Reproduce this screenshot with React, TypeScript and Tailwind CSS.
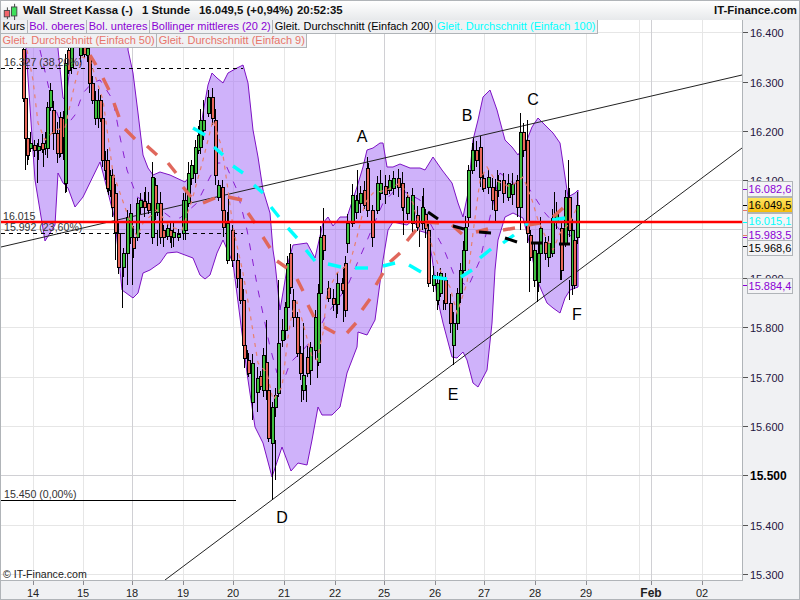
const hours = [33, 83, 132, 183, 233, 284, 335, 384, 435, 484, 535, 586, 639, 702];
const darkHours = [132, 384, 651];
const levels = [32, 81, 131, 180, 278, 327, 377, 426, 525, 574];
const darkLevels = [229, 475];

const prices = [
  { label: "16.400", y: 32 },
  { label: "16.300", y: 82 },
  { label: "16.200", y: 131 },
  { label: "16.100", y: 180 },
  { label: "15.900", y: 278 },
  { label: "15.800", y: 327 },
  { label: "15.700", y: 377 },
  { label: "15.600", y: 426 },
  { label: "15.500", y: 475, bold: true },
  { label: "15.400", y: 525 },
  { label: "15.300", y: 574 },
];

const days = [
  { label: "14", x: 33 },
  { label: "15", x: 83 },
  { label: "18", x: 132 },
  { label: "19", x: 183 },
  { label: "20", x: 233 },
  { label: "21", x: 284 },
  { label: "22", x: 335 },
  { label: "25", x: 384 },
  { label: "26", x: 435 },
  { label: "27", x: 484 },
  { label: "28", x: 535 },
  { label: "29", x: 586 },
  { label: "Feb", x: 651, bold: true },
  { label: "02", x: 702 },
];

const tags = [
  { label: "16.082,6", y: 181, cls: "text-[#8a00d4] bg-[#f4f4f6]" },
  { label: "16.049,5", y: 197, cls: "text-black bg-gradient-to-b from-[#ffe65c] to-[#f5bd00]" },
  { label: "16.015,1", y: 213, cls: "text-[#00ffff] bg-[#f4f4f6]" },
  { label: "15.983,5", y: 227, cls: "text-[#8a00d4] bg-[#f4f4f6]" },
  { label: "15.968,6", y: 240, cls: "text-black bg-[#f4f4f6]" },
  { label: "15.884,4", y: 278, cls: "text-[#8a00d4] bg-[#f4f4f6]" },
];

const tagTicks = [
  { y: 189, c: "#8a00d4" },
  { y: 205, c: "#000000" },
  { y: 210, c: "#e8746a" },
  { y: 222, c: "#00ffff" },
  { y: 235, c: "#e8746a" },
  { y: 237, c: "#8a00d4" },
  { y: 246, c: "#000000" },
  { y: 285, c: "#8a00d4" },
];

const legend = [
  { label: "Kurs", cls: "text-black" },
  { label: "Bol. oberes", cls: "text-[#8a00d4]" },
  { label: "Bol. unteres", cls: "text-[#8a00d4]" },
  { label: "Bollinger mittleres (20 2)", cls: "text-[#8a00d4]" },
  { label: "Gleit. Durchschnitt (Einfach 200)", cls: "text-black" },
  { label: "Gleit. Durchschnitt (Einfach 100)", cls: "text-[#00ffff]" },
];
const legend2 = [
  { label: "Gleit. Durchschnitt (Einfach 50)", cls: "text-[#e8746a]" },
  { label: "Gleit. Durchschnitt (Einfach 9)", cls: "text-[#e8746a]" },
];

// bollinger band outline, left to right along the top then back along the bottom
const band =
  "26,40 58,40 58,49 63,98 66,100 72,49 72,40 128,40 128,50 133,73 138,113 143,155 148,168 153,175 160,172 170,175 185,182 " +
  "195,170 203,113 208,85 212,73 217,78 223,83 228,73 237,68 243,65 248,83 253,130 258,157 263,190 270,213 273,250 275,263 280,310 " +
  "288,263 293,245 307,243 315,258 323,223 328,217 333,226 340,217 347,217 357,187 363,167 367,150 373,148 380,143 383,143 387,167 " +
  "393,167 400,164 410,168 420,168 425,170 433,157 442,170 452,183 458,203 463,217 468,193 473,140 478,120 483,97 490,90 497,110 " +
  "505,140 512,147 518,155 527,140 532,127 538,118 547,127 553,133 560,143 563,163 568,197 575,193 578,190 " +
  "578,287 570,290 565,298 560,313 553,308 547,303 537,280 528,237 523,218 513,213 505,217 498,240 495,270 492,323 487,370 478,387 " +
  "473,383 467,360 463,352 457,358 452,357 443,323 437,297 432,257 427,233 420,231 413,220 407,225 393,222 388,230 383,260 375,320 " +
  "367,335 358,332 357,347 347,373 340,407 332,415 322,415 318,407 312,440 307,465 298,463 291,471 282,447 272,477 263,443 255,427 " +
  "247,373 242,333 233,263 223,240 217,253 210,275 205,279 200,275 193,258 177,252 167,253 160,263 150,270 143,273 138,293 133,298 " +
  "122,290 115,220 103,173 100,162 83,197 75,207 68,188 63,183 58,173 55,225 45,241 35,180 26,49";

// x, body top, body bottom, 1 = up candle
const candles: [number, number, number, number][] = [
  [23, 49, 98, 0], [25, 98, 138, 0], [27, 138, 155, 0], [30, 143, 148, 1], [34, 145, 150, 0], [38, 146, 150, 1], [42, 143, 149, 0], [45, 143, 148, 1],
  [47, 107, 148, 1], [50, 90, 107, 1], [53, 110, 133, 0], [57, 133, 153, 0], [60, 117, 153, 0], [63, 118, 137, 0], [65, 63, 183, 1], [68, 50, 70, 0],
  [71, 40, 67, 1], [80, 46, 55, 1], [84, 46, 54, 0], [87, 48, 55, 1], [89, 55, 83, 0], [92, 83, 100, 0], [95, 100, 118, 1], [98, 100, 118, 1], [100, 100, 118, 0],
  [102, 118, 160, 0], [105, 160, 170, 0], [107, 160, 188, 0], [110, 175, 190, 1], [112, 175, 207, 0], [115, 193, 232, 0], [118, 233, 267, 0], [123, 253, 267, 1],
  [127, 217, 253, 1], [130, 213, 237, 1], [133, 237, 248, 0], [137, 203, 237, 1], [140, 200, 207, 1], [144, 201, 207, 0], [148, 203, 210, 0], [152, 177, 237, 1],
  [155, 185, 210, 0], [157, 203, 212, 1], [160, 203, 237, 0], [163, 230, 237, 0], [167, 228, 236, 1], [170, 230, 236, 0], [173, 232, 237, 1], [178, 234, 237, 1],
  [183, 200, 233, 1], [185, 200, 230, 1], [188, 173, 203, 1], [191, 165, 178, 1], [195, 147, 173, 1], [198, 135, 150, 1], [200, 120, 147, 1], [203, 120, 130, 1], [208, 97, 113, 1],
  [212, 97, 118, 0], [215, 120, 175, 0], [218, 185, 197, 1], [222, 187, 210, 0], [223, 210, 227, 0], [227, 223, 260, 1], [232, 230, 260, 0],
  [237, 260, 278, 0], [240, 278, 300, 0], [243, 300, 345, 0], [244, 345, 358, 0], [248, 360, 373, 0], [252, 363, 402, 1], [257, 378, 392, 1], [260, 376, 386, 0],
  [263, 355, 390, 1], [266, 362, 390, 0], [268, 390, 438, 0], [272, 407, 443, 1], [275, 395, 407, 1], [278, 343, 393, 1], [282, 330, 340, 1], [285, 307, 330, 1],
  [287, 263, 307, 1], [290, 253, 287, 0], [293, 300, 317, 0], [297, 317, 353, 0], [300, 353, 373, 0], [303, 375, 390, 1], [307, 357, 373, 0], [310, 347, 370, 1],
  [315, 317, 350, 1], [318, 293, 362, 1], [320, 237, 293, 1], [323, 235, 250, 0], [328, 288, 298, 0], [333, 298, 304, 0], [337, 283, 304, 1], [342, 283, 290, 0],
  [345, 263, 310, 0], [347, 223, 243, 1], [352, 195, 223, 1], [356, 200, 212, 1], [360, 193, 203, 1], [364, 190, 205, 0], [367, 168, 210, 0], [372, 210, 237, 0],
  [377, 183, 210, 1], [380, 183, 193, 1], [385, 186, 194, 0], [389, 180, 190, 1], [393, 178, 188, 1], [398, 178, 187, 0], [402, 183, 207, 0], [407, 197, 213, 1],
  [412, 195, 223, 1], [417, 215, 227, 0], [422, 207, 223, 1], [425, 214, 228, 0], [428, 230, 283, 0], [433, 275, 285, 1], [437, 283, 300, 1], [440, 273, 293, 1],
  [445, 280, 303, 0], [450, 303, 323, 0], [453, 323, 345, 1], [457, 293, 323, 1], [460, 270, 293, 1], [463, 250, 270, 1], [465, 227, 250, 1], [468, 170, 217, 1],
  [472, 150, 170, 1], [476, 150, 160, 0], [480, 147, 177, 0], [483, 178, 188, 0], [488, 177, 187, 1], [492, 187, 200, 0], [495, 190, 210, 0], [498, 180, 190, 1],
  [503, 180, 193, 0], [508, 183, 197, 1], [512, 184, 194, 1], [517, 180, 207, 0], [520, 132, 207, 1], [523, 132, 150, 0], [527, 140, 233, 0], [530, 235, 257, 0],
  [534, 250, 280, 1], [538, 253, 282, 1], [540, 228, 253, 1], [545, 242, 253, 0], [548, 243, 257, 1], [552, 218, 253, 1], [556, 213, 222, 1], [561, 228, 270, 0],
  [565, 197, 243, 1], [569, 197, 230, 0], [572, 230, 285, 1], [574, 240, 285, 0], [577, 205, 237, 1],
];

// x, top, bottom
const wicks: [number, number, number][] = [
  [25, 130, 170], [28, 150, 160], [37, 143, 183], [43, 145, 167], [53, 130, 150], [59, 150, 158], [63, 135, 160], [66, 180, 192],
  [108, 185, 195], [115, 230, 260], [122, 267, 308], [127, 250, 285], [132, 245, 285], [145, 187, 202], [152, 162, 238], [157, 230, 246],
  [171, 236, 248], [203, 100, 120], [228, 193, 225], [247, 350, 375], [252, 400, 420], [257, 390, 412], [266, 320, 362], [272, 438, 500], [275, 440, 480],
  [278, 280, 343], [303, 323, 400], [301, 385, 402], [306, 385, 402], [310, 345, 385], [317, 362, 378], [323, 208, 235], [343, 267, 322], [336, 300, 318],
  [357, 170, 200], [368, 163, 170], [372, 235, 245], [380, 170, 186], [412, 200, 235], [419, 225, 247], [423, 188, 207], [403, 200, 235], [438, 295, 305],
  [443, 300, 310], [453, 345, 365], [473, 138, 152], [482, 170, 190], [497, 170, 182], [495, 205, 222], [512, 175, 205], [520, 113, 132], [527, 120, 140],
  [529, 255, 292], [537, 280, 302], [554, 192, 218], [560, 265, 280], [568, 160, 197], [569, 280, 300], [577, 192, 205], [520, 205, 230],
];

// thick dashed moving averages, one segment per dash
const ma100 = [
  [193, 128, 205, 135], [214, 147, 223, 155], [233, 166, 243, 173], [254, 185, 263, 193], [271, 207, 279, 217], [288, 228, 297, 238], [306, 250, 315, 261],
  [328, 264, 341, 267], [355, 268, 368, 268], [383, 266, 395, 263], [409, 265, 421, 272], [433, 277, 447, 279], [461, 277, 472, 270], [480, 258, 491, 249],
  [503, 243, 514, 235], [525, 223, 528, 225], [552, 220, 565, 218],
];
const ma50 = [
  [90, 55, 96, 65], [103, 78, 109, 90], [114, 103, 119, 117], [125, 129, 135, 139], [147, 146, 157, 155], [168, 163, 176, 173], [183, 187, 191, 197],
  [203, 203, 215, 198], [228, 197, 242, 200], [248, 213, 255, 223], [263, 237, 270, 248], [277, 261, 287, 268], [297, 279, 303, 291], [308, 305, 314, 317],
  [324, 327, 335, 333], [347, 333, 356, 323], [362, 310, 370, 299], [376, 285, 383, 273], [390, 262, 400, 253], [407, 241, 416, 230], [427, 222, 439, 223],
  [452, 225, 462, 234], [476, 232, 488, 229], [503, 230, 515, 228], [528, 225, 540, 223], [553, 217, 563, 208],
];
const ma200 = [
  [428, 212, 438, 219], [453, 226, 464, 229], [479, 232, 491, 233], [505, 238, 517, 242], [531, 243, 542, 243], [559, 244, 570, 244],
];

const ma9 =
  "27,50 33,80 38,123 45,140 55,130 65,128 75,83 82,57 90,60 103,100 113,173 127,213 137,237 143,223 157,210 170,227 182,230 192,200 203,160 213,120 222,148 " +
  "228,190 233,227 243,273 250,313 258,363 267,373 273,400 282,387 288,337 292,313 297,302 303,323 312,357 317,360 323,333 327,293 337,273 350,263 357,237 365,203 " +
  "373,193 387,190 400,183 413,203 420,230 427,227 433,250 440,270 450,287 457,313 467,283 473,233 480,180 487,167 495,180 510,187 523,177 532,200 538,220 547,240 553,250 560,233 570,223 577,207";
const midBand =
  "40,50 50,93 63,130 75,115 83,93 92,83 100,80 113,100 120,137 127,170 137,197 157,207 170,217 180,218 197,203 210,177 218,163 225,163 237,190 247,230 258,290 " +
  "270,347 277,373 285,377 290,363 300,353 315,337 325,317 347,287 363,250 383,203 397,188 407,193 420,200 430,223 443,247 455,277 468,287 480,260 490,217 500,173 513,183 528,187 545,213 560,230 573,237";

const letters = [
  { t: "A", x: 362, y: 142 },
  { t: "B", x: 467, y: 121 },
  { t: "C", x: 533, y: 105 },
  { t: "D", x: 282, y: 523 },
  { t: "E", x: 453, y: 400 },
  { t: "F", x: 577, y: 320 },
];

const Chip = ({ label, cls }: { label: string; cls: string }) => (
  <div className={`h-[14px] px-[1.5px] leading-[13px] text-[11px] whitespace-nowrap bg-[#f0f1f3] border-r border-b border-[#b0b4b8] ${cls}`}>
    {label}
  </div>
);

const Chart = () => (
  <svg viewBox="1 20 741 560" className="absolute inset-0 w-[741px] h-[560px]">
    <g shapeRendering="crispEdges" strokeWidth="1">
      {hours.map((x) => <line key={x} x1={x + 0.5} x2={x + 0.5} y1="20" y2="580" stroke="#e6e6e6" />)}
      {levels.map((y) => <line key={y} x1="1" x2="742" y1={y + 0.5} y2={y + 0.5} stroke="#e6e6e6" />)}
      {darkHours.map((x) => <line key={x} x1={x + 0.5} x2={x + 0.5} y1="20" y2="580" stroke="#d0d0d4" />)}
      {darkLevels.map((y) => <line key={y} x1="1" x2="742" y1={y + 0.5} y2={y + 0.5} stroke="#d0d0d4" />)}
    </g>
    <polygon points={band} fill="#a066f5" fillOpacity="0.5" stroke="#7d12c4" strokeWidth="1" />
    <polyline points={midBand} fill="none" stroke="#8a1fd0" strokeWidth="1" strokeDasharray="7 9" />
    <line x1="1" y1="247" x2="742" y2="75" stroke="#222" strokeWidth="1" />
    <line x1="165" y1="580" x2="742" y2="148" stroke="#222" strokeWidth="1" />
    <g shapeRendering="crispEdges">
      <line x1="1" x2="243" y1="68.5" y2="68.5" stroke="#000" strokeDasharray="4 4" />
      <line x1="1" x2="243" y1="233.5" y2="233.5" stroke="#000" strokeDasharray="4 4" />
      <line x1="1" x2="236" y1="500.5" y2="500.5" stroke="#000" />
      {wicks.map(([x, a, b], i) => <line key={i} x1={x + 0.5} x2={x + 0.5} y1={a} y2={b} stroke="#000" />)}
      {candles.map(([x, a, b], i) => <line key={i} x1={x + 0.5} x2={x + 0.5} y1={a - 5 - (i % 4) * 2} y2={b + 4 + (i % 3) * 3} stroke="#000" />)}
      {candles.map(([x, a, b, up], i) => (
        <rect key={i} x={x - 1} y={a + 0.5} width="3" height={b - a} fill={up ? "#3fbf3f" : "#e8675a"} stroke="#000" />
      ))}
    </g>
    <polyline points={ma9} fill="none" stroke="#e8806f" strokeWidth="1.2" strokeDasharray="4 5" />
    {ma50.map(([a, b, c, d], i) => <line key={i} x1={a} y1={b} x2={c} y2={d} stroke="#e0675c" strokeWidth="3.4" />)}
    {ma100.map(([a, b, c, d], i) => <line key={i} x1={a} y1={b} x2={c} y2={d} stroke="#00ffff" strokeWidth="3.4" />)}
    {ma200.map(([a, b, c, d], i) => <line key={i} x1={a} y1={b} x2={c} y2={d} stroke="#000" strokeWidth="3" />)}
    <line x1="1" x2="742" y1="222" y2="222" stroke="#ff0000" strokeWidth="2.4" />
    <g className="text-[10.6px]" fill="#333">
      <text x="4" y="66">16.327 (38,20%)</text>
      <text x="3" y="220">16.015</text>
      <text x="4" y="231">15.992 (23,60%)</text>
      <text x="4" y="498">15.450 (0,00%)</text>
      <text x="3" y="578" fill="#222">© IT-Finance.com</text>
    </g>
    {letters.map((l) => (
      <text key={l.t} x={l.x} y={l.y} textAnchor="middle" className="text-[16px]" fill="#000">{l.t}</text>
    ))}
  </svg>
);

export default function App() {
  return (
    <div className="w-[800px] h-[600px] overflow-hidden flex flex-col border border-[#b0b4b8] bg-[#f0f1f3] font-['Liberation_Sans',Arial,sans-serif] text-[#111]">
      <header className="h-[19px] shrink-0 flex items-center whitespace-nowrap bg-gradient-to-b from-white to-[#e7e9eb] text-[11.4px] font-bold pr-[2px]">
        <svg viewBox="0 0 20 20" className="w-[18px] h-[18px] ml-[1px] mr-[3px]">
          <path d="M6 6v13M14 2v18" stroke="#333" strokeWidth="1" />
          <rect x="2.5" y="9.5" width="6" height="7" fill="#f0646a" stroke="#444" />
          <rect x="10.5" y="5.5" width="6" height="10" fill="#3ee05a" stroke="#444" />
        </svg>
        <span className="w-[119px]">Wall Street Kassa (-)</span>
        <span className="w-[57px]">1 Stunde</span>
        <span className="w-[98px]">16.049,5 (+0,94%)</span>
        <span>20:52:35</span>
        <span className="ml-auto">IT-Finance.com</span>
      </header>

      <div className="flex h-[561px] shrink-0">
        <div className="relative w-[742px] h-[561px] bg-white border-r border-b border-[#b0b4b8]">
          <Chart />
          <div className="absolute left-0 top-0">
            <div className="flex">
              {legend.map((l) => <Chip key={l.label} {...l} />)}
            </div>
            <div className="flex">
              {legend2.map((l) => <Chip key={l.label} {...l} />)}
            </div>
          </div>
        </div>

        <div className="relative flex-1 text-[11px]">
          {prices.map((p) => (
            <div key={p.label} className="absolute left-0 flex items-center h-[14px]" style={{ top: p.y - 27 }}>
              <div className="w-[5px] h-px bg-[#555] mr-[2px]" />
              <span className={p.bold ? "translate-y-px font-bold text-[12px] text-black" : "translate-y-px text-[#1f1440]"}>{p.label}</span>
            </div>
          ))}
          {tagTicks.map((t, i) => (
            <div key={i} className="absolute left-0 w-[4px] h-px" style={{ top: t.y - 20, backgroundColor: t.c }} />
          ))}
          {tags.map((t) => (
            <div
              key={t.label}
              className={`absolute left-[4px] w-[46px] h-[16px] leading-[14px] text-center text-[11px] border border-[#b0b4b8] ${t.cls}`}
              style={{ top: t.y - 20 }}
            >
              {t.label}
            </div>
          ))}
        </div>
      </div>

      <footer className="relative h-[18px] shrink-0 text-[11px] text-[#222]">
        {days.map((d) => (
          <div key={d.label} className="absolute top-0 flex flex-col items-center w-[30px]" style={{ left: d.x - 16 }}>
            <div className="w-px h-[4px] bg-[#8a8a90] mb-[2px]" />
            <span className={d.bold ? "font-bold text-[12px] leading-[13px]" : "leading-[13px]"}>{d.label}</span>
          </div>
        ))}
      </footer>
    </div>
  );
}
